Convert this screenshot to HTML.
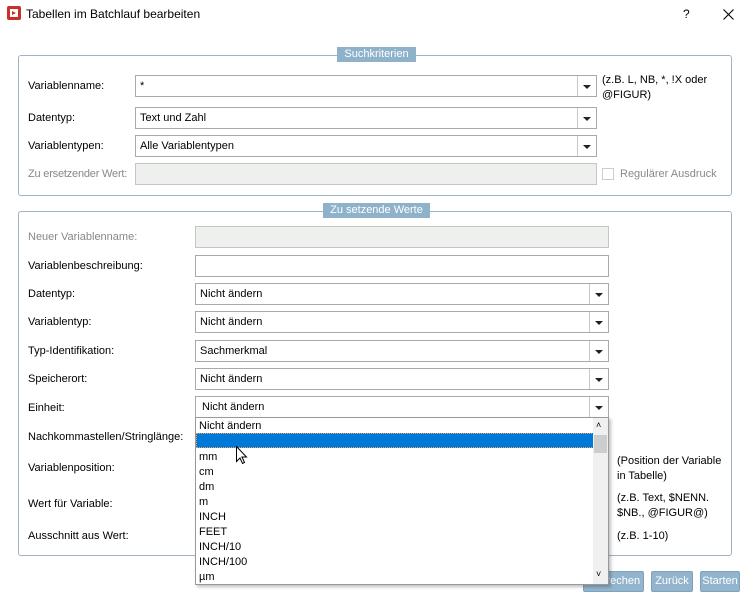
<!DOCTYPE html><html><head><meta charset="utf-8"><style>
*{box-sizing:border-box;margin:0;padding:0}
body{width:750px;height:602px;background:#fff;font-family:"Liberation Sans",sans-serif;font-size:11px;color:#000;position:relative;overflow:hidden}
.a{position:absolute;white-space:nowrap}
.box{position:absolute;border:1px solid #9fb3c4;border-radius:3px}
.leg{position:absolute;background:#8fb2cb;color:#fff;text-align:center;height:15px;line-height:15px;font-size:11px}
.in{position:absolute;border:1px solid #a9a9a9;background:#fff;height:22px;line-height:21px;padding-left:4px}
.dis{background:#eef0ee;border-color:#c5c5c5}
.dd::after{content:"";position:absolute;right:0;top:0;width:18px;height:20px;border-left:1px solid #c8c8c8}
.ar{position:absolute;right:5px;top:9px;width:0;height:0;border-left:4px solid transparent;border-right:4px solid transparent;border-top:4px solid #222}
.g{color:#888}
.btn{position:absolute;top:571px;height:21px;background:#92b4cd;border:1px solid #7fa2bb;color:#fff;line-height:19px;text-align:center;border-radius:2px}
</style></head><body>
<div class="a" style="left:7px;top:6px;width:14px;height:14px;background:#c8302c;border-radius:2px"><div style="position:absolute;left:3px;top:3px;width:8px;height:8px;background:#fff"></div><div style="position:absolute;left:5px;top:5px;width:0;height:0;border-left:4px solid #c8302c;border-top:2px solid transparent;border-bottom:2px solid transparent"></div></div>
<div class="a" style="left:26px;top:7px;font-size:12px">Tabellen im Batchlauf bearbeiten</div>
<div class="a" style="left:683px;top:7px;font-size:12px">?</div>
<svg class="a" style="left:723px;top:9px" width="11" height="11" viewBox="0 0 11 11"><path d="M0.5 0.5L10.5 10.5M10.5 0.5L0.5 10.5" stroke="#000" stroke-width="1.1"/></svg>

<div class="box" style="left:18px;top:55px;width:714px;height:141px"></div>
<div class="leg" style="left:337px;top:47px;width:79px">Suchkriterien</div>
<div class="a" style="left:28px;top:80px">Variablenname:</div>
<div class="in dd" style="left:135px;top:75px;width:462px">*<span class="ar"></span></div>
<div class="a" style="left:602px;top:73px;line-height:15px">(z.B. L, NB, *, !X oder<br>@FIGUR)</div>
<div class="a" style="left:28px;top:112px">Datentyp:</div>
<div class="in dd" style="left:135px;top:107px;width:462px">Text und Zahl<span class="ar"></span></div>
<div class="a" style="left:28px;top:140px">Variablentypen:</div>
<div class="in dd" style="left:135px;top:135px;width:462px">Alle Variablentypen<span class="ar"></span></div>
<div class="a g" style="left:28px;top:168px;letter-spacing:-0.2px">Zu ersetzender Wert:</div>
<div class="in dis" style="left:135px;top:163px;width:462px"></div>
<div class="a" style="left:602px;top:168px;width:12px;height:12px;border:1px solid #ccc"></div>
<div class="a g" style="left:620px;top:168px">Regulärer Ausdruck</div>

<div class="box" style="left:18px;top:211px;width:714px;height:345px"></div>
<div class="leg" style="left:323px;top:203px;width:107px">Zu setzende Werte</div>
<div class="a g" style="left:28px;top:231px">Neuer Variablenname:</div>
<div class="in dis" style="left:195px;top:226px;width:414px"></div>
<div class="a" style="left:28px;top:260px">Variablenbeschreibung:</div>
<div class="in" style="left:195px;top:255px;width:414px"></div>
<div class="a" style="left:28px;top:288px">Datentyp:</div>
<div class="in dd" style="left:195px;top:283px;width:414px">Nicht ändern<span class="ar"></span></div>
<div class="a" style="left:28px;top:316px">Variablentyp:</div>
<div class="in dd" style="left:195px;top:311px;width:414px">Nicht ändern<span class="ar"></span></div>
<div class="a" style="left:28px;top:345px">Typ-Identifikation:</div>
<div class="in dd" style="left:195px;top:340px;width:414px">Sachmerkmal<span class="ar"></span></div>
<div class="a" style="left:28px;top:373px">Speicherort:</div>
<div class="in dd" style="left:195px;top:368px;width:414px">Nicht ändern<span class="ar"></span></div>
<div class="a" style="left:28px;top:402px">Einheit:</div>
<div class="in dd" style="left:195px;top:396px;width:414px;padding-left:6px">Nicht ändern<span class="ar"></span></div>
<div class="a" style="left:28px;top:431px">Nachkommastellen/Stringlänge:</div>
<div class="a" style="left:28px;top:462px">Variablenposition:</div>
<div class="a" style="left:28px;top:498px">Wert für Variable:</div>
<div class="a" style="left:28px;top:530px">Ausschnitt aus Wert:</div>
<div class="a" style="left:617px;top:454px;line-height:15px">(Position der Variable<br>in Tabelle)</div>
<div class="a" style="left:617px;top:491px;line-height:15px">(z.B. Text, $NENN.<br>$NB., @FIGUR@)</div>
<div class="a" style="left:617px;top:530px">(z.B. 1-10)</div>

<div class="btn" style="left:583px;width:61px">Abbrechen</div>
<div class="btn" style="left:651px;width:42px">Zurück</div>
<div class="btn" style="left:700px;width:40px">Starten</div>

<div class="a" style="left:195px;top:417px;width:414px;height:168px;background:#fff;border:1px solid #999;box-shadow:2px 2px 3px rgba(0,0,0,.25);line-height:15px">
<div style="padding-left:3px;height:15px;padding-top:1px">Nicht ändern</div>
<div style="height:15px;background:#0078d7;width:398px;border:1px dotted #e8a060"></div>
<div style="padding:0 3px;margin-top:2px">mm<br>cm<br>dm<br>m<br>INCH<br>FEET<br>INCH/10<br>INCH/100<br>µm</div>
<div style="position:absolute;right:0;top:0;width:15px;height:166px;background:#f0f0f0"><div style="position:absolute;top:17px;left:1px;width:13px;height:18px;background:#cdcdcd"></div><div style="position:absolute;top:0;left:3px;font-size:9px">˄</div><div style="position:absolute;bottom:2px;left:3px;font-size:9px">˅</div></div>
</div>
<svg class="a" style="left:236px;top:446px" width="12" height="19" viewBox="0 0 12 19"><path d="M0.5 0.5V15.5L4 12L6.5 17.5L8.5 16.5L6 11H10.5Z" fill="#fff" stroke="#000"/></svg>
</body></html>
